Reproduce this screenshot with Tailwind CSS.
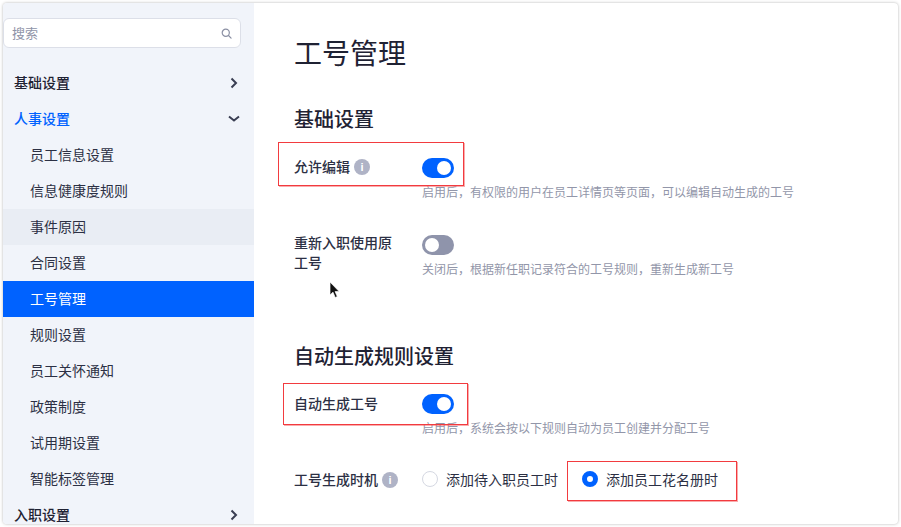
<!DOCTYPE html>
<html lang="zh"><head><meta charset="utf-8">
<script src="https://cdn.jsdelivr.net/npm/@tailwindcss/browser@4"></script>
</head>
<body class="bg-white overflow-hidden">
<div class="relative w-[901px] h-[527px] p-[3px] bg-white font-['Noto_Sans_CJK_SC','Liberation_Sans',sans-serif]">
<div class="flex h-[521px] w-[895px] rounded-[4px] overflow-hidden bg-white shadow-[0_0_3px_rgba(0,0,0,0.3)]">
  <aside class="w-[251px] shrink-0 bg-[#f1f4fa] overflow-hidden">
    <div class="pt-[15px] pr-[13px]">
      <div class="flex items-center justify-between h-[30px] bg-white border border-[#dcdfe8] rounded-[6px] pl-[8px] pr-[8px]">
        <span class="text-[13px] text-[#8f94a8]">搜索</span>
        <svg width="11" height="11" viewBox="0 0 12 12" fill="none" stroke="#8a8fa3" stroke-width="1.3"><circle cx="5.2" cy="5.2" r="3.9"/><path d="M8.2 8.2L11 11" stroke-linecap="round"/></svg>
      </div>
    </div>
    <nav class="mt-[17px] text-[14px] leading-[34px] text-[#2c3044]">
      <div class="flex items-center justify-between h-9 pl-[11px] pr-[16px] font-medium text-[#1f2233]"><span class="-mt-[2px]">基础设置</span>
        <svg width="8" height="12" viewBox="0 0 8 12" fill="none" stroke="#3a3e52" stroke-width="2"><path d="M1.5 1.5L6 6L1.5 10.5"/></svg></div>
      <div class="flex items-center justify-between h-9 pl-[11px] pr-[14px] font-medium text-[#0062ff]"><span class="-mt-[2px]">人事设置</span>
        <svg width="12" height="8" viewBox="0 0 12 8" fill="none" stroke="#3a3e52" stroke-width="2"><path d="M1 1.5L6 5.5L11 1.5"/></svg></div>
      <div class="h-9 pl-[27px]">员工信息设置</div>
      <div class="h-9 pl-[27px]">信息健康度规则</div>
      <div class="h-9 pl-[27px] bg-[#e9edf4]">事件原因</div>
      <div class="h-9 pl-[27px]">合同设置</div>
      <div class="h-9 pl-[27px] bg-[#0062ff] text-white">工号管理</div>
      <div class="h-9 pl-[27px]">规则设置</div>
      <div class="h-9 pl-[27px]">员工关怀通知</div>
      <div class="h-9 pl-[27px]">政策制度</div>
      <div class="h-9 pl-[27px]">试用期设置</div>
      <div class="h-9 pl-[27px]">智能标签管理</div>
      <div class="flex items-center justify-between h-9 pl-[11px] pr-[16px] font-medium text-[#1f2233]"><span class="-mt-[2px]">入职设置</span>
        <svg width="8" height="12" viewBox="0 0 8 12" fill="none" stroke="#3a3e52" stroke-width="2"><path d="M1.5 1.5L6 6L1.5 10.5"/></svg></div>
    </nav>
  </aside>
  <main class="flex-1 pl-[40px] overflow-hidden text-[#2c3044]">
    <h1 class="mt-[29px] text-[28px] leading-[40px] text-[#1f2233]">工号管理</h1>
    <h2 class="mt-[33px] text-[20px] leading-[28px] font-medium text-[#1f2233]">基础设置</h2>

    <div class="mt-[25px] grid grid-cols-[128px_1fr]">
      <div class="flex items-center gap-[4px] h-[20px] -mt-[2px] text-[14px] leading-[20px] font-medium"><span>允许编辑</span>
        <span class="flex items-center justify-center w-[16px] h-[16px] mt-[2px] rounded-full bg-[#afb3c6] text-white text-[11px] font-bold font-['Liberation_Sans',sans-serif]">i</span></div>
      <div>
        <div class="flex items-center justify-end w-[32px] h-[20px] rounded-full bg-[#0062ff] pr-[3px]"><span class="w-[14px] h-[14px] rounded-full bg-white"></span></div>
        <p class="mt-[5px] text-[12px] leading-[18px] text-[#9296a9]">启用后，有权限的用户在员工详情页等页面，可以编辑自动生成的工号</p>
      </div>
    </div>

    <div class="mt-[34px] grid grid-cols-[128px_1fr]">
      <div class="w-[100px] text-[14px] leading-[20px] -mt-[3px] font-medium">重新入职使用原工号</div>
      <div>
        <div class="flex items-center justify-start w-[32px] h-[20px] rounded-full bg-[#8f94ab] pl-[3px]"><span class="w-[14px] h-[14px] rounded-full bg-white"></span></div>
        <p class="mt-[5px] text-[12px] leading-[18px] text-[#9296a9]">关闭后，根据新任职记录符合的工号规则，重新生成新工号</p>
      </div>
    </div>

    <h2 class="mt-[64px] text-[20px] leading-[28px] font-medium text-[#1f2233]">自动生成规则设置</h2>

    <div class="mt-[24px] grid grid-cols-[128px_1fr]">
      <div class="h-[20px] text-[14px] leading-[20px] -mt-[1px] font-medium">自动生成工号</div>
      <div>
        <div class="flex items-center justify-end w-[32px] h-[20px] rounded-full bg-[#0062ff] pr-[3px]"><span class="w-[14px] h-[14px] rounded-full bg-white"></span></div>
        <p class="mt-[5px] text-[12px] leading-[18px] text-[#9296a9]">启用后，系统会按以下规则自动为员工创建并分配工号</p>
      </div>
    </div>

    <div class="mt-[32px] grid grid-cols-[128px_1fr] items-center">
      <div class="flex items-center gap-[4px] h-[20px] text-[14px] leading-[20px] font-medium"><span>工号生成时机</span>
        <span class="flex items-center justify-center w-[16px] h-[16px] mt-[2px] rounded-full bg-[#afb3c6] text-white text-[11px] font-bold font-['Liberation_Sans',sans-serif]">i</span></div>
      <div class="flex items-center text-[14px] leading-[20px]">
        <span class="w-[16px] h-[16px] rounded-full border border-[#d5d8e2] bg-white"></span>
        <span class="ml-[8px]">添加待入职员工时</span>
        <span class="ml-[24px] w-[16px] h-[16px] rounded-full border-[5px] border-[#0062ff] bg-white"></span>
        <span class="ml-[8px]">添加员工花名册时</span>
      </div>
    </div>
  </main>
</div>
<div class="absolute left-[278px] top-[142px] w-[186px] h-[44px] border border-[#f23b3f] shadow-[1px_1px_0_rgba(244,71,74,0.45)]"></div>
<div class="absolute left-[283px] top-[383px] w-[185px] h-[42px] border border-[#f23b3f] shadow-[1px_1px_0_rgba(244,71,74,0.45)]"></div>
<div class="absolute left-[567px] top-[461px] w-[170px] h-[40px] border border-[#f23b3f] shadow-[1px_1px_0_rgba(244,71,74,0.45)]"></div>
<svg class="absolute left-[329px] top-[281px]" width="12" height="18" viewBox="0 0 12 18"><path d="M1 1V14L4 11.2L6.2 16.5L8.3 15.6L6.1 10.6H10.2Z" fill="#111" stroke="#fff" stroke-width="0.7"/></svg>
</div>
</body></html>
